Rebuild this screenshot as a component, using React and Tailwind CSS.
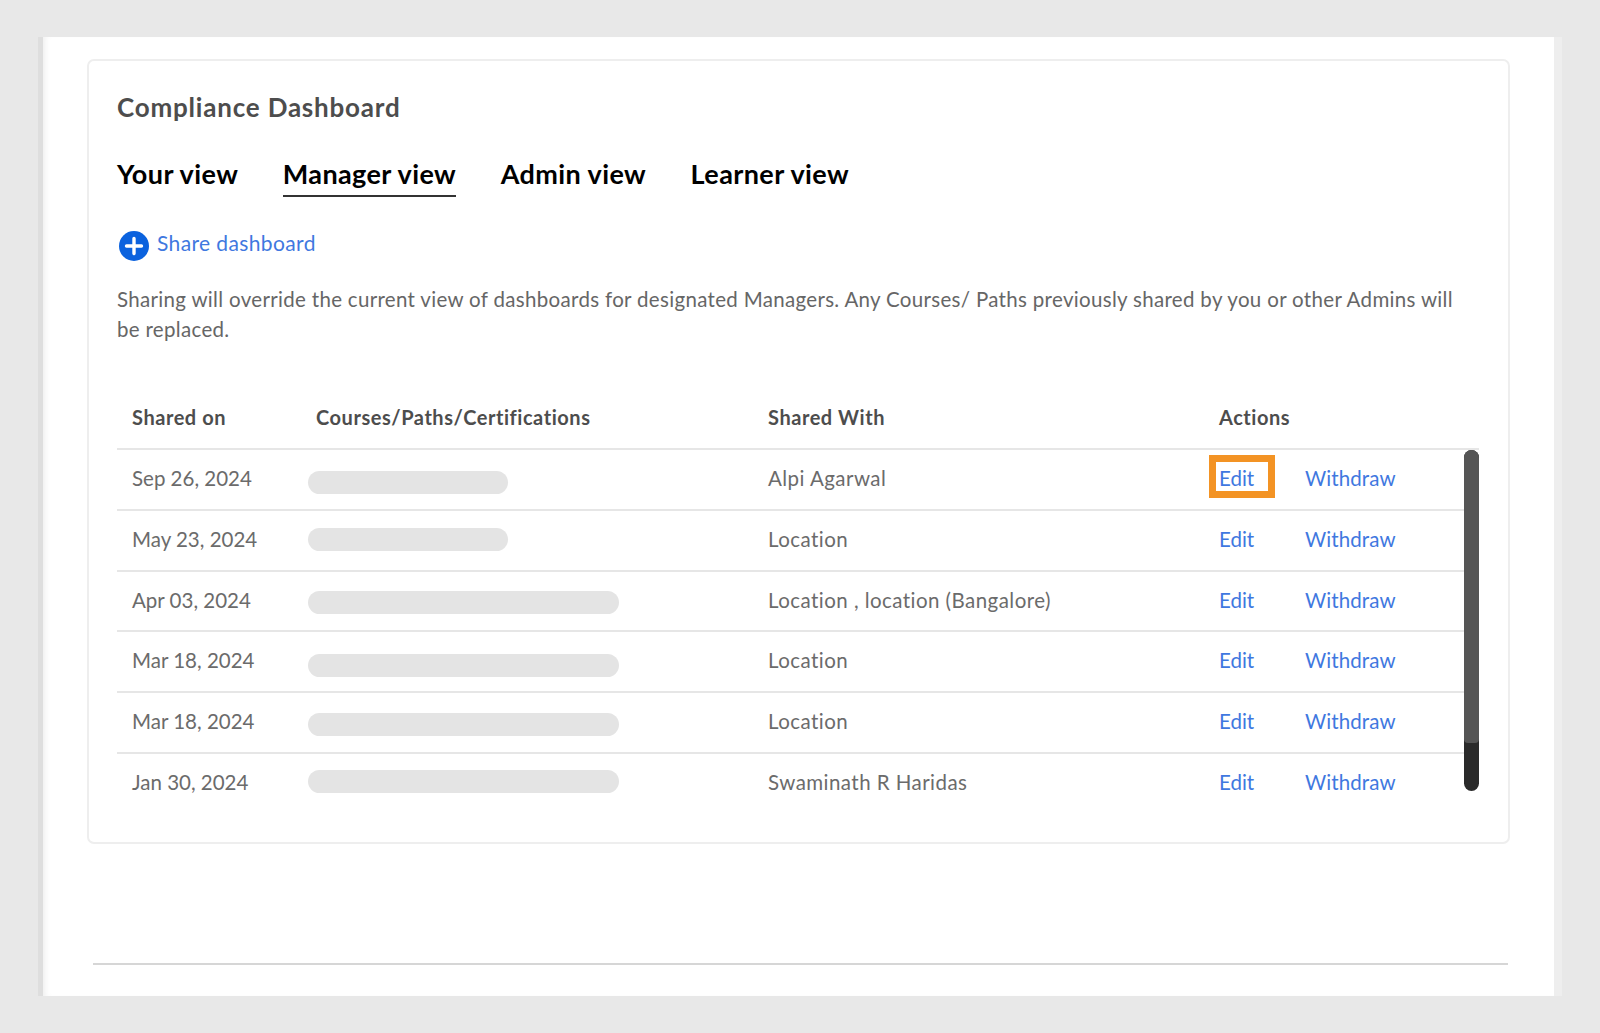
const rows = [
  { date: "Sep 26, 2024", pill: "w-[200px] mt-[9px]", shared: "Alpi Agarwal" },
  { date: "May 23, 2024", pill: "w-[200px] mt-[1px]", shared: "Location" },
  { date: "Apr 03, 2024", pill: "w-[311px] mt-[5px]", shared: "Location , location (Bangalore)" },
  { date: "Mar 18, 2024", pill: "w-[311px] mt-[9px]", shared: "Location" },
  { date: "Mar 18, 2024", pill: "w-[311px] mt-[5px]", shared: "Location" },
  { date: "Jan 30, 2024", pill: "w-[311px] mt-[-1px]", shared: "Swaminath R Haridas" },
];

const tabs = ["Your view", "Manager view", "Admin view", "Learner view"];

const App = () => {
  return (
    <div className="h-[1033px] w-[1600px] overflow-hidden bg-[#e8e8e8] pl-[38px] pt-[37px] font-['Lato',sans-serif]">
      <div className="box-border h-[959px] w-[1524px] border-l-[5px] border-r-[8px] border-l-[#dedede] border-r-[#eeeeee] bg-white pl-[44px] pt-[22px] shadow-[inset_6px_0_6px_-4px_#eeeeee]">
        {/* Dashboard card */}
        <div className="box-border h-[785px] w-[1423px] rounded-[7px] border-2 border-[#eeeeee] pl-[28px] pt-[29px]">
          <h1 className="text-[26px] font-bold leading-[34px] tracking-[0.8px] text-[#4d4d4d]">Compliance Dashboard</h1>

          <div className="mt-[32px] flex gap-[44.5px]">
            {tabs.map((tab) => (
              <div
                key={tab}
                className={`h-[41px] text-[27px] font-bold leading-[36px] tracking-[0.4px] text-black ${tab === "Manager view" ? "border-b-2 border-[#333333]" : ""}`}
              >
                {tab}
              </div>
            ))}
          </div>

          <div className="mt-[33px] flex h-[32px] items-start pl-[2px]">
            <svg width="30" height="30" viewBox="0 0 30 30" className="mt-[1px] shrink-0">
              <circle cx="15" cy="15" r="15" fill="#0b62de" />
              <path d="M15 7.5v15M7.5 15h15" stroke="white" strokeWidth="3.4" strokeLinecap="round" />
            </svg>
            <a className="ml-[8px] text-[21px] leading-[26px] tracking-[0.38px] text-[#3f78e0]">Share dashboard</a>
          </div>

          <p className="mt-[22px] w-[1345px] text-[20.5px] leading-[30px] tracking-[0.32px] text-[#666666]">
            Sharing will override the current view of dashboards for designated Managers. Any Courses/ Paths previously shared by you or other Admins will be replaced.
          </p>

          {/* Shared table */}
          <div className="relative mt-[42px] w-[1362px]">
            <div className="grid h-[62px] grid-cols-[184px_452px_451px_1fr] items-center pl-[15px] text-[20px] font-bold tracking-[0.55px] text-[#4d4d4d]">
              <div>Shared on</div>
              <div>Courses/Paths/Certifications</div>
              <div>Shared With</div>
              <div>Actions</div>
            </div>
            <div className="h-[2px] bg-[#e6e6e6]" />
            <div className="w-[1347px]">
              {rows.map((row, i) => (
                <div
                  key={i}
                  className={`grid h-[60.8px] grid-cols-[184px_452px_451px_1fr] items-center pl-[15px] text-[20.5px] text-[#6b6b6b] ${i < rows.length - 1 ? "border-b-2 border-[#e6e6e6] pb-[2px]" : "pb-[4px]"}`}
                >
                  <div>{row.date}</div>
                  <div>
                    <div className={`ml-[-8px] h-[23px] rounded-[12px] bg-[#e4e4e4] ${row.pill}`} />
                  </div>
                  <div className="tracking-[0.45px]">{row.shared}</div>
                  <div className="flex text-[#3f78e0]">
                    <a className="w-[86px]">Edit</a>
                    <a className="tracking-[0.1px]">Withdraw</a>
                  </div>
                </div>
              ))}
            </div>

            {/* Focus ring on first Edit link */}
            <div className="absolute left-[1092px] top-[69px] h-[43px] w-[66px] border-[7px] border-[#f39324]" />

            {/* Scrollbar */}
            <div className="absolute right-0 top-[64px] h-[341px] w-[15px] overflow-hidden rounded-full bg-[#2a2a2a]">
              <div className="h-[293px] rounded-b-[4px] bg-[#555555]" />
            </div>
          </div>
        </div>

        <div className="ml-[6px] mt-[119px] h-[2px] w-[1415px] bg-[#d6d6d6]" />
      </div>
    </div>
  );
};

export default App;
